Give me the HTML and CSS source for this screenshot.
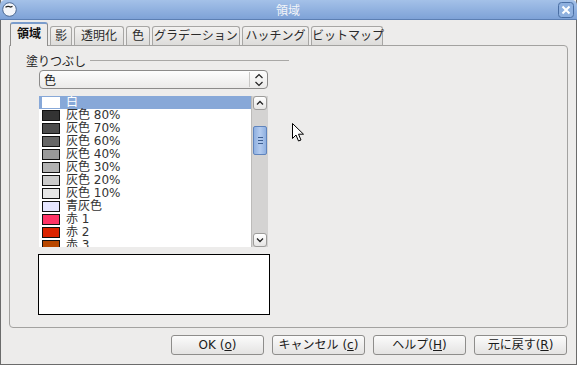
FILE: index.html
```html
<!DOCTYPE html>
<html lang="ja">
<head>
<meta charset="utf-8">
<title>領域</title>
<link rel="stylesheet" href="styles.css">
</head>
<body>
<div class="window">
  <div class="titlebar">
    <span class="app-icon"><svg width="15" height="15" viewBox="0 0 15 15"><circle cx="7.5" cy="7.5" r="6.8" fill="#f4f6fa" stroke="#4d6a94" stroke-width="1"/><path d="M3.5 5.2 Q6 3.6 8.5 5 L10.5 4.4" stroke="#222" stroke-width="1.3" fill="none"/></svg></span>
    <span class="title">領域</span>
    <span class="close"><svg width="16" height="16" viewBox="0 0 16 16"><rect x="0.5" y="0.5" width="15" height="15" rx="3" fill="#8eb0df" stroke="#4a6ea3"/><path d="M4.5 4.5 L11.5 11.5 M11.5 4.5 L4.5 11.5" stroke="#fff" stroke-width="2"/></svg></span>
  </div>
  <div class="body">
    <div class="tabs">
      <div class="tab active">領域</div>
      <div class="tab w22">影</div>
      <div class="tab w50">透明化</div>
      <div class="tab w24">色</div>
      <div class="tab w88">グラデーション</div>
      <div class="tab w67">ハッチング</div>
      <div class="tab w72">ビットマップ</div>
    </div>
    <div class="panel">
      <div class="group-title"><span>塗りつぶし</span><span class="rule"></span></div>
      <div class="select"><span class="select-text">色</span><span class="select-arrows"><svg width="10" height="14" viewBox="0 0 10 14"><path d="M1.5 5 L5 1.5 L8.5 5 M1.5 9 L5 12.5 L8.5 9" stroke="#222" stroke-width="1.2" fill="none"/></svg></span></div>
      <div class="listwrap">
        <div class="list">
          <div class="item selected"><span class="sw" style="background:#ffffff;border-color:#ffffff"></span>白</div>
          <div class="item"><span class="sw" style="background:#333333"></span>灰色 80%</div>
          <div class="item"><span class="sw" style="background:#4c4c4c"></span>灰色 70%</div>
          <div class="item"><span class="sw" style="background:#666666"></span>灰色 60%</div>
          <div class="item"><span class="sw" style="background:#999999"></span>灰色 40%</div>
          <div class="item"><span class="sw" style="background:#b2b2b2"></span>灰色 30%</div>
          <div class="item"><span class="sw" style="background:#cccccc"></span>灰色 20%</div>
          <div class="item"><span class="sw" style="background:#e6e6e6"></span>灰色 10%</div>
          <div class="item"><span class="sw" style="background:#e6e6ff"></span>青灰色</div>
          <div class="item"><span class="sw" style="background:#ff3366"></span>赤 1</div>
          <div class="item"><span class="sw" style="background:#dc2300"></span>赤 2</div>
          <div class="item"><span class="sw" style="background:#b84700"></span>赤 3</div>
        </div>
        <div class="scrollbar">
          <div class="sb-btn"><svg width="8" height="6" viewBox="0 0 8 6"><path d="M1 4.5 L4 1.5 L7 4.5" stroke="#222" stroke-width="1.3" fill="none"/></svg></div>
          <div class="sb-track">
            <div class="sb-thumb"><span></span><span></span><span></span></div>
          </div>
          <div class="sb-btn"><svg width="8" height="6" viewBox="0 0 8 6"><path d="M1 1.5 L4 4.5 L7 1.5" stroke="#222" stroke-width="1.3" fill="none"/></svg></div>
        </div>
      </div>
      <div class="preview"></div>
    </div>
    <div class="buttons">
      <div class="btn">OK (<u>o</u>)</div>
      <div class="btn">キャンセル (<u>c</u>)</div>
      <div class="btn">ヘルプ(<u>H</u>)</div>
      <div class="btn">元に戻す(<u>R</u>)</div>
    </div>
  </div>
  <svg class="cursor" width="13" height="20" viewBox="0 0 13 20"><path d="M0.5 0.5 L0.5 15.5 L4 12 L6.5 18 L9 17 L6.5 11.2 L11.5 11.2 Z" fill="#fff" stroke="#000" stroke-width="1"/></svg>
</div>
</body>
</html>
```

FILE: styles.css
```css
* { box-sizing: border-box; }
html, body { margin: 0; padding: 0; }
body {
  width: 577px;
  height: 365px;
  overflow: hidden;
  font-family: "DejaVu Sans", "Noto Sans CJK JP", sans-serif;
  font-size: 12px;
  color: #1a1a1a;
}
.window {
  position: relative;
  width: 577px;
  height: 365px;
  background: #edeceb;
  border: 1px solid #6b6b6b;
  border-top: none;
  display: flex;
  flex-direction: column;
}
.titlebar {
  height: 20px;
  margin: 0 -1px;
  background: linear-gradient(#a4c1e8, #7ea2d7);
  border-bottom: 1px solid #5c7fb3;
  border-radius: 5px 5px 0 0;
  display: flex;
  align-items: center;
  padding: 0 3px 0 2px;
  color: #f2f4f8;
}
.app-icon { display: flex; width: 16px; }
.title { flex: 1; text-align: center; font-size: 12px; }
.close { display: flex; margin-top: 1px; }
.body {
  flex: 1;
  padding: 1px 9px 0 8px;
  display: flex;
  flex-direction: column;
}
.tabs {
  display: flex;
  align-items: flex-end;
  height: 24px;
  gap: 2px;
  padding-left: 1px;
  position: relative;
  z-index: 1;
}
.tab {
  flex-shrink: 0;
  white-space: nowrap;
  height: 19px;
  border: 1px solid #a7a6a4;
  border-bottom: none;
  border-radius: 3px 3px 0 0;
  background: linear-gradient(#f3f2f1, #dddcda);
  text-align: center;
  line-height: 18px;
  color: #2a2a2a;
}
.tab.active {
  width: 38px;
  height: 24px;
  background: #edeceb;
  font-weight: bold;
  border-color: #8e8d8b;
  border-top: 2px solid #7a9ccc;
  line-height: 21px;
  margin-bottom: -1px;
  color: #111;
}
.w22 { width: 22px; }
.w50 { width: 50px; }
.w24 { width: 24px; }
.w88 { width: 88px; }
.w67 { width: 67px; }
.w72 { width: 72px; }
.panel {
  height: 283px;
  width: 559px;
  border: 1px solid #a3a2a0;
  border-radius: 0 4px 4px 4px;
  padding: 6px 0 0 16px;
}
.group-title {
  display: flex;
  align-items: center;
  gap: 4px;
  height: 16px;
  color: #222;
}
.rule {
  width: 199px;
  height: 1px;
  background: #a9a8a6;
}
.select {
  margin: 2px 0 0 13px;
  width: 229px;
  height: 19px;
  border: 1px solid #8c8b8a;
  border-radius: 4px;
  background: linear-gradient(#fdfdfd, #ebeae9);
  display: flex;
  align-items: center;
  padding-left: 4px;
}
.select-text { flex: 1; }
.select-arrows {
  display: flex;
  align-items: center;
  justify-content: center;
  width: 18px;
  height: 15px;
  border-left: 1px solid #c8c7c5;
}
.listwrap {
  margin: 7px 0 0 13px;
  display: flex;
  height: 151px;
  width: 229px;
}
.list {
  width: 212px;
  height: 151px;
  background: #fff;
  overflow: hidden;
  color: #333;
}
.item {
  height: 13px;
  display: flex;
  align-items: center;
  line-height: 13px;
  white-space: nowrap;
}
.item.selected { background: #87a8d8; color: #fff; }
.sw {
  width: 18px;
  height: 11px;
  border: 1px solid #111;
  margin: 0 6px 0 3px;
  flex-shrink: 0;
}
.scrollbar {
  width: 17px;
  display: flex;
  flex-direction: column;
  background: #d4d3d2;
  border-left: 1px solid #bcbbb9;
}
.sb-btn {
  height: 14px;
  margin: 0 1px;
  border: 1px solid #9d9c9a;
  border-radius: 3px;
  background: linear-gradient(#ffffff, #e6e5e4);
  display: flex;
  align-items: center;
  justify-content: center;
}
.sb-track { flex: 1; padding-top: 16px; }
.sb-thumb {
  height: 29px;
  margin: 0 1px;
  border: 1px solid #5f84bd;
  border-radius: 2px;
  background: linear-gradient(90deg, #8fb0e0, #b3cbef 50%, #8fb0e0);
  display: flex;
  flex-direction: column;
  align-items: center;
  justify-content: center;
  gap: 2px;
}
.sb-thumb span { width: 5px; height: 1px; background: #3d5f91; }
.preview {
  margin: 7px 0 0 12px;
  width: 232px;
  height: 61px;
  border: 1.5px solid #000;
  background: #fff;
}
.buttons {
  display: flex;
  justify-content: flex-end;
  gap: 8px;
  padding-top: 7px;
}
.btn {
  width: 93px;
  height: 20px;
  border: 1px solid #8e8d8b;
  border-radius: 3px;
  background: linear-gradient(#fbfbfb, #e4e3e2);
  text-align: center;
  line-height: 18px;
  color: #1a1a1a;
  white-space: nowrap;
}
.btn u { text-decoration: underline; }
.cursor { position: absolute; left: 291px; top: 123px; }
```
